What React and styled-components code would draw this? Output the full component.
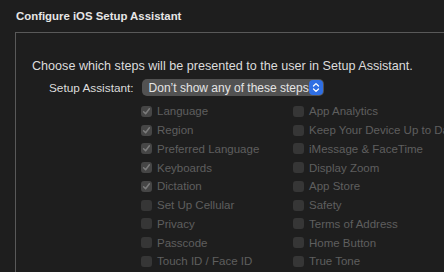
import React from 'react';
import styled, { createGlobalStyle } from 'styled-components';

const GlobalStyle = createGlobalStyle`
  html, body {
    margin: 0;
    padding: 0;
    background: #1e1e1e;
    overflow: hidden;
  }
  body {
    font-family: "Liberation Sans", Arial, sans-serif;
    -webkit-font-smoothing: antialiased;
  }
`;

const Page = styled.div`
  width: 444px;
  height: 272px;
  overflow: hidden;
  padding: 9px 0 0 15px;
  box-sizing: border-box;
`;

const Title = styled.div`
  font-size: 11.4px;
  font-weight: 700;
  color: #e6e6e6;
  line-height: 14px;
  padding-left: 1px;
  margin-bottom: 9px;
`;

const Box = styled.div`
  width: 600px;
  height: 400px;
  border: 1px solid #595959;
  box-sizing: border-box;
  padding: 25px 0 0 16px;
`;

const Description = styled.div`
  font-size: 12.6px;
  color: #dcdcdc;
  line-height: 16px;
  white-space: nowrap;
`;

const FormRow = styled.div`
  display: flex;
  align-items: center;
  gap: 8px;
  margin-top: 5px;
  padding-left: 17px;
`;

const Label = styled.span`
  font-size: 11.8px;
  color: #dcdcdc;
  white-space: nowrap;
`;

const Popup = styled.div`
  display: flex;
  align-items: center;
  justify-content: space-between;
  width: 182px;
  height: 17px;
  box-sizing: border-box;
  background: #525252;
  border-radius: 5px;
  padding: 0 1px 0 7px;
  font-size: 12px;
  color: #e4e4e4;
  white-space: nowrap;
`;

const Stepper = styled.div`
  width: 14px;
  height: 15px;
  border-radius: 4px;
  background: #2f6fe4;
  display: flex;
  align-items: center;
  justify-content: center;
`;

const Grid = styled.div`
  display: grid;
  grid-template-columns: 152px 152px;
  grid-auto-flow: column;
  grid-template-rows: repeat(9, 18.75px);
  margin-top: 6px;
  padding-left: 109px;
`;

const Item = styled.div`
  display: flex;
  align-items: center;
  gap: 5px;
  font-size: 11.5px;
  color: #5f5f5f;
  white-space: nowrap;
`;

const Check = styled.span`
  width: 11px;
  height: 11px;
  flex: none;
  border-radius: 3px;
  background: ${p => (p.$checked ? '#464646' : '#363636')};
  display: flex;
  align-items: center;
  justify-content: center;
`;

const left = [
  ['Language', true],
  ['Region', true],
  ['Preferred Language', true],
  ['Keyboards', true],
  ['Dictation', true],
  ['Set Up Cellular', false],
  ['Privacy', false],
  ['Passcode', false],
  ['Touch ID / Face ID', false],
];

const right = [
  'App Analytics',
  'Keep Your Device Up to Date',
  'iMessage & FaceTime',
  'Display Zoom',
  'App Store',
  'Safety',
  'Terms of Address',
  'Home Button',
  'True Tone',
];

function Checkbox({ checked }) {
  return (
    <Check $checked={checked}>
      {checked && (
        <svg width="9" height="9" viewBox="0 0 9 9">
          <path d="M1.6 4.8 L3.6 6.8 L7.4 1.8" fill="none" stroke="#7c7c7c" strokeWidth="1.5" strokeLinecap="round" strokeLinejoin="round" />
        </svg>
      )}
    </Check>
  );
}

export default function App() {
  return (
    <Page>
      <GlobalStyle />
      <Title>Configure iOS Setup Assistant</Title>
      <Box>
        <Description>Choose which steps will be presented to the user in Setup Assistant.</Description>
        <FormRow>
          <Label>Setup Assistant:</Label>
          <Popup>
            <span>Don’t show any of these steps</span>
            <Stepper>
              <svg width="8" height="11" viewBox="0 0 8 11">
                <path d="M1.5 4 L4 1.6 L6.5 4 M1.5 7 L4 9.4 L6.5 7" fill="none" stroke="#fff" strokeWidth="1.3" strokeLinecap="round" strokeLinejoin="round" />
              </svg>
            </Stepper>
          </Popup>
        </FormRow>
        <Grid>
          {left.map(([name, checked]) => (
            <Item key={name}>
              <Checkbox checked={checked} />
              {name}
            </Item>
          ))}
          {right.map(name => (
            <Item key={name}>
              <Checkbox checked={false} />
              {name}
            </Item>
          ))}
        </Grid>
      </Box>
    </Page>
  );
}
